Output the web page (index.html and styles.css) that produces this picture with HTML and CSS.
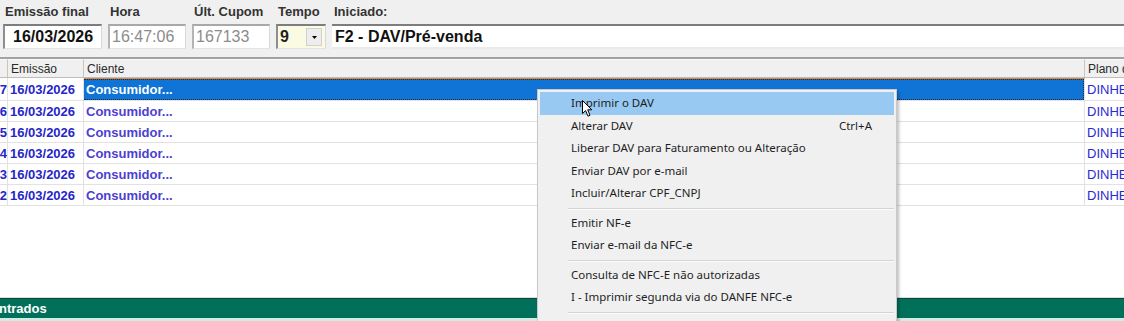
FILE: index.html
```html
<!DOCTYPE html>
<html lang="pt-BR">
<head>
  <meta charset="UTF-8" />
  <title>DAV / Pré-venda</title>
  <link rel="stylesheet" href="styles.css">
</head>
<body>
  <div class="topo">
    <div class="campo campo-emissao">
      <label>Emissão final</label>
      <div class="caixa forte centro">16/03/2026</div>
    </div>
    <div class="campo campo-hora">
      <label>Hora</label>
      <div class="caixa apagada">16:47:06</div>
    </div>
    <div class="campo campo-cupom">
      <label>Últ. Cupom</label>
      <div class="caixa apagada">167133</div>
    </div>
    <div class="campo campo-tempo">
      <label>Tempo</label>
      <div class="caixa combo">
        <span class="combo-valor">9</span>
        <span class="combo-botao"><svg width="5" height="3" viewBox="0 0 5 3"><path d="M0 0h5L2.5 3z" fill="#000"/></svg></span>
      </div>
    </div>
    <div class="campo campo-iniciado">
      <label>Iniciado:</label>
      <div class="caixa forte larga">F2 - DAV/Pré-venda</div>
    </div>
  </div>

  <div class="grade">
    <table>
      <colgroup>
        <col style="width: 8px">
        <col style="width: 76px">
        <col style="width: 1001px">
        <col style="width: 120px">
      </colgroup>
      <thead>
        <tr>
          <th></th>
          <th>Emissão</th>
          <th>Cliente</th>
          <th>Plano de Pagamento</th>
        </tr>
      </thead>
      <tbody>
        <tr>
          <td class="num"><span>167</span></td>
          <td>16/03/2026</td>
          <td class="sel"><div class="foco">Consumidor...</div></td>
          <td class="plano">DINHEIRO</td>
        </tr>
        <tr>
          <td class="num"><span>166</span></td>
          <td>16/03/2026</td>
          <td class="cliente">Consumidor...</td>
          <td class="plano">DINHEIRO</td>
        </tr>
        <tr>
          <td class="num"><span>165</span></td>
          <td>16/03/2026</td>
          <td class="cliente">Consumidor...</td>
          <td class="plano">DINHEIRO</td>
        </tr>
        <tr>
          <td class="num"><span>164</span></td>
          <td>16/03/2026</td>
          <td class="cliente">Consumidor...</td>
          <td class="plano">DINHEIRO</td>
        </tr>
        <tr>
          <td class="num"><span>163</span></td>
          <td>16/03/2026</td>
          <td class="cliente">Consumidor...</td>
          <td class="plano">DINHEIRO</td>
        </tr>
        <tr>
          <td class="num"><span>162</span></td>
          <td>16/03/2026</td>
          <td class="cliente">Consumidor...</td>
          <td class="plano">DINHEIRO</td>
        </tr>
      </tbody>
    </table>
  </div>

  <div class="rodape"><span>ntrados</span></div>
  <div class="rodape-pe"></div>

  <div class="menu">
    <div class="item ativo">Imprimir o DAV</div>
    <div class="item">Alterar DAV <span class="atalho">Ctrl+A</span></div>
    <div class="item">Liberar DAV para Faturamento ou Alteração</div>
    <div class="item">Enviar DAV por e-mail</div>
    <div class="item">Incluir/Alterar CPF_CNPJ</div>
    <div class="separador"></div>
    <div class="item">Emitir NF-e</div>
    <div class="item">Enviar e-mail da NFC-e</div>
    <div class="separador"></div>
    <div class="item">Consulta de NFC-E não autorizadas</div>
    <div class="item">I - Imprimir segunda via do DANFE NFC-e</div>
    <div class="separador"></div>
    <div class="item">Visualizar DAV / NOTA FISCAL emitida</div>
  </div>

  <svg class="cursor" width="12" height="18" viewBox="0 0 12 18">
    <path d="M0.5 0.5 L0.5 13.5 L3.6 10.6 L6 16.2 L8 15.3 L5.7 9.8 L9.8 9.8 Z" fill="#fff" stroke="#000" stroke-width="1" stroke-linejoin="round"/>
  </svg>
</body>
</html>
```

FILE: styles.css
```css
body {
  margin: 0;
  height: 321px;
  overflow: hidden;
  display: flex;
  flex-direction: column;
  background: #f0f0f0;
  font-family: 'Liberation Sans', Arial, sans-serif;
  color: #222;
}

/* cabeçalho com os campos */
.topo {
  display: flex;
  gap: 6px;
  padding: 4px 0 8px 3px;
  height: 45px;
  border-bottom: 2px solid #a3a3a3;
  overflow: hidden;
}

.campo {
  display: flex;
  flex-direction: column;
}

.campo label {
  font-size: 13px;
  font-weight: bold;
  line-height: 16px;
  padding-left: 2px;
  margin-bottom: 4px;
  color: #333;
  white-space: nowrap;
}

.campo-emissao { width: 99px; }
.campo-hora { width: 78px; }
.campo-cupom { width: 78px; }
.campo-tempo { width: 50px; }
.campo-iniciado { flex: 1; margin-right: -6px; }

.caixa {
  box-sizing: border-box;
  height: 25px;
  line-height: 22px;
  font-size: 16px;
  background: #fff;
  border-top: 2px solid #7d7d7d;
  border-left: 2px solid #8e8e8e;
  border-right: 1px solid #d8d8d8;
  border-bottom: 1px solid #e4e4e4;
  padding-left: 2px;
  white-space: nowrap;
  overflow: hidden;
}

.forte {
  font-weight: bold;
  color: #111;
}

.centro {
  padding-left: 8px;
}

.apagada {
  color: #8c8c8c;
  border-top-color: #a8a8a8;
  border-left-color: #b4b4b4;
}

.larga {
  padding-left: 3px;
  border-left: none;
  border-bottom: 2px solid #ebebeb;
}

.combo {
  display: flex;
  padding: 0;
  background: #fbfbe4;
}

.combo-valor {
  flex: 1;
  font-weight: bold;
  padding-left: 2px;
}

.combo-botao {
  width: 14px;
  margin: 2px 3px 2px 0;
  background: #ededed;
  border: 1px solid #d0d0d0;
  display: flex;
  align-items: center;
  justify-content: center;
}

/* grade de DAVs */
.grade {
  flex: 1;
  background: #fff;
  overflow: hidden;
  border-bottom: 1px solid #dcdcdc;
}

table {
  table-layout: fixed;
  width: 1205px;
  border-collapse: separate;
  border-spacing: 0;
}

th {
  height: 17px;
  padding: 0 3px;
  text-align: left;
  font-size: 12px;
  font-weight: normal;
  color: #2a2a2a;
  background: #f0f0f0;
  border-right: 1px solid #c6c6c6;
  border-bottom: 1px solid #bdbdbd;
  border-top: 1px solid #fafafa;
  white-space: nowrap;
  overflow: hidden;
}

td {
  height: 20px;
  padding: 0 2px;
  font-size: 13px;
  font-weight: bold;
  color: #2626c8;
  border-right: 1px solid #e2e2e2;
  border-bottom: 1px solid #e2e2e2;
  white-space: nowrap;
  overflow: hidden;
}

td.num {
  padding: 0 1px 0 0;
  direction: rtl;
}

td.cliente {
  color: #4d3fd0;
}

td.plano {
  font-weight: normal;
  color: #2a2ad2;
}

td.sel {
  padding: 0;
  border-top: 1px solid #e8842e;
}

.foco {
  height: 19px;
  line-height: 19px;
  padding-left: 2px;
  background: #0f74d6;
  color: #fff;
  border: 1px dotted #2b2b2b;
  border-left: none;
}

/* barra verde */
.rodape {
  height: 19px;
  line-height: 19px;
  background: #01705a;
  border-top: 1px solid #0a4a3b;
  color: #fff;
  font-size: 13px;
  font-weight: bold;
}

.rodape span {
  margin-left: -1px;
}

.rodape-pe {
  height: 3px;
  background: #d3ece3;
}

/* menu de contexto */
.menu {
  position: absolute;
  left: 537px;
  top: 89px;
  width: 354px;
  padding: 2px;
  background: #f0f0f0;
  border: 1px solid #c9c9c9;
  box-shadow: 2px 2px 3px rgba(0, 0, 0, 0.25);
  font-family: 'Noto Sans', 'Open Sans', sans-serif;
  font-size: 11.5px;
  color: #1e1e1e;
}

.item {
  display: flex;
  justify-content: space-between;
  height: 22.5px;
  line-height: 22.5px;
  padding: 0 22px 0 31px;
  white-space: nowrap;
}

.item.ativo {
  background: #97c9f2;
}

.atalho {
  color: #1e1e1e;
}

.separador {
  height: 7px;
  margin-left: 28px;
  background: linear-gradient(#f0f0f0 3px, #d4d4d4 3px, #d4d4d4 4px, #fbfbfb 4px, #fbfbfb 5px, #f0f0f0 5px);
}

.cursor {
  position: absolute;
  left: 582px;
  top: 100px;
}
```
